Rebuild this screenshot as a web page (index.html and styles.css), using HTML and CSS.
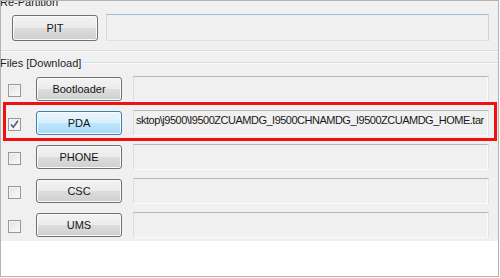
FILE: index.html
```html
<!DOCTYPE html>
<html>
<head>
<meta charset="utf-8">
<link rel="stylesheet" href="styles.css">
</head>
<body>
<div class="window">
  <div class="panel">
    <div class="legend legend-top">Re-Partition</div>
    <div class="pit-row">
      <div class="btn btn-pit">PIT</div>
      <div class="field field-focus"></div>
    </div>
    <div class="sep"></div>
    <div class="group-head">
      <span class="legend">Files [Download]</span>
      <span class="rule"></span>
    </div>
    <div class="rows">
      <div class="row">
        <span class="check"></span>
        <div class="btn">Bootloader</div>
        <div class="field"></div>
      </div>
      <div class="row">
        <span class="check checked"><svg width="11" height="11" viewBox="0 0 11 11"><path d="M2 5.5 L4.3 8.3 L9 1.8" fill="none" stroke="#4a5c8c" stroke-width="1.6"/></svg></span>
        <div class="btn btn-hot">PDA</div>
        <div class="field"><div class="path">sktop\j9500\I9500ZCUAMDG_I9500CHNAMDG_I9500ZCUAMDG_HOME.tar</div></div>
      </div>
      <div class="row">
        <span class="check"></span>
        <div class="btn">PHONE</div>
        <div class="field"></div>
      </div>
      <div class="row">
        <span class="check"></span>
        <div class="btn">CSC</div>
        <div class="field"></div>
      </div>
      <div class="row">
        <span class="check"></span>
        <div class="btn">UMS</div>
        <div class="field"></div>
      </div>
    </div>
  </div>
  <div class="highlight"></div>
</div>
</body>
</html>
```
FILE: styles.css
```css
* {
  box-sizing: border-box;
  margin: 0;
  padding: 0;
}

body {
  margin: 0;
  width: 500px;
  height: 278px;
  background: #ffffff;
  font-family: "Liberation Sans", Arial, sans-serif;
  font-size: 11px;
  color: #1c1c1c;
  overflow: hidden;
}

.window {
  position: relative;
  width: 499px;
  height: 277px;
  border: 1px solid #b3b3b3;
  background: #ffffff;
  overflow: hidden;
}

.panel {
  background: #f0f0f0;
  height: 245px;
}

.legend {
  display: block;
  line-height: 13px;
  white-space: nowrap;
  color: #1e1e1e;
}

.legend-top {
  margin-top: -5px;
  margin-left: -1px;
}

.pit-row {
  display: flex;
  align-items: flex-start;
  margin-top: 5px;
}

.btn {
  display: flex;
  align-items: center;
  justify-content: center;
  width: 86px;
  height: 24px;
  margin-top: 1px;
  border: 1px solid #707070;
  border-radius: 3px;
  background: linear-gradient(#f3f3f3 0%, #ebebeb 48%, #dddddd 52%, #cfcfcf 100%);
  box-shadow: inset 0 0 0 1px #fbfbfb;
  color: #141414;
  line-height: 13px;
}

.btn-pit {
  margin-left: 11px;
  height: 26px;
}

.btn-hot {
  border-color: #3c7fb1;
  background: linear-gradient(#eaf6fd 0%, #d9f0fc 48%, #bee6fd 52%, #a7d9f5 100%);
}

.field {
  flex: none;
  height: 26px;
  border: 1px solid;
  border-color: #b6b6b6 #e2e2e2 #fbfbfb #dcdcdc;
  background: #f0f0f0;
  box-shadow: inset -1px 0 0 #fdfdfd;
  overflow: hidden;
}

.field-focus {
  margin-left: 8px;
  width: 383px;
  height: 27px;
  border-color: #9fbcd7 #c3d8ea #d5e4f0 #c7dbec;
  box-shadow: none;
}

.sep {
  margin-top: 9px;
  height: 2px;
  border-top: 1px solid #dadada;
  border-bottom: 1px solid #fcfcfc;
}

.group-head {
  display: flex;
  align-items: flex-start;
  margin-top: 5px;
}

.group-head .legend {
  margin-left: -1px;
}

.rule {
  flex: 1;
  height: 2px;
  margin-top: 5px;
  margin-left: 2px;
  border-top: 1px solid #d5dfe5;
  border-bottom: 1px solid #fcfcfc;
}

.rows {
  display: flex;
  flex-direction: column;
  gap: 8px;
  margin-top: 6px;
}

.row {
  display: flex;
  align-items: flex-start;
  height: 26px;
}

.row .btn {
  margin-left: 15px;
}

.row .field {
  margin-left: 11px;
  width: 356px;
}

.check {
  display: flex;
  align-items: center;
  justify-content: center;
  flex: none;
  width: 13px;
  height: 13px;
  margin-left: 7px;
  margin-top: 8px;
  border: 1px solid #97989a;
  background: linear-gradient(135deg, #dfe0e1 0%, #efefef 50%, #fbfbfb 100%);
  box-shadow: inset 0 0 0 1px #f4f4f4;
}

.check.checked {
  background: linear-gradient(135deg, #e6e7e8 0%, #f2f2f2 50%, #fdfdfd 100%);
}

.path {
  padding: 3px 0 0 2px;
  line-height: 13px;
  white-space: nowrap;
  letter-spacing: -0.5px;
  color: #1a1a1a;
}

.highlight {
  position: absolute;
  left: 2px;
  top: 101px;
  width: 494px;
  height: 39px;
  border: 3px solid #f01010;
}
```
